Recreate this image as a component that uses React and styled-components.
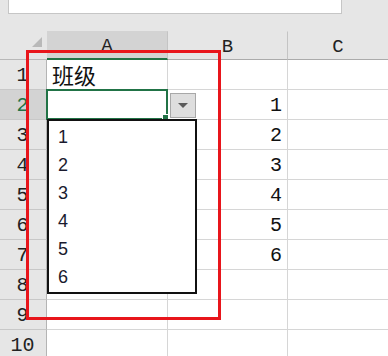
import styled, { createGlobalStyle } from "styled-components";

const GlobalStyle = createGlobalStyle`
  html, body {
    margin: 0;
    padding: 0;
    background: #e6e6e6;
  }
  #root {
    width: 388px;
    height: 356px;
    overflow: hidden;
  }
`;

const rows = [
  { n: 1, a: "班级", b: "" },
  { n: 2, a: "", b: "1", selected: true },
  { n: 3, a: "", b: "2" },
  { n: 4, a: "", b: "3" },
  { n: 5, a: "", b: "4" },
  { n: 6, a: "", b: "5" },
  { n: 7, a: "", b: "6" },
  { n: 8, a: "", b: "" },
  { n: 9, a: "", b: "" },
  { n: 10, a: "", b: "" },
];

const options = ["1", "2", "3", "4", "5", "6"];

const App = () => {
  return (
    <Window>
      <GlobalStyle />
      <FormulaStrip>
        <FormulaBox />
      </FormulaStrip>
      <Sheet>
        <Corner>
          <CornerMark />
        </Corner>
        <ColHeader $active>A</ColHeader>
        <ColHeader>B</ColHeader>
        <ColHeader $last>C</ColHeader>
        {rows.map((r) => (
          <Row key={r.n} r={r} />
        ))}
      </Sheet>
      <DropButton>
        <svg width="10" height="6" viewBox="0 0 10 6">
          <path d="M0 0 H10 L5 5 Z" fill="#5a5a5a" />
        </svg>
      </DropButton>
      <DropList>
        {options.map((o) => (
          <DropItem key={o}>{o}</DropItem>
        ))}
      </DropList>
      <Highlight />
    </Window>
  );
};

const Row = ({ r }) => (
  <>
    <RowHeader $active={r.selected}>{r.n}</RowHeader>
    {r.selected ? (
      <SelectedCell>
        <FillHandle />
      </SelectedCell>
    ) : (
      <TextCell>{r.a}</TextCell>
    )}
    <NumCell>{r.b}</NumCell>
    <Cell $last />
  </>
);

const Window = styled.div`
  position: relative;
  width: 388px;
  height: 356px;
  background: #e6e6e6;
  overflow: hidden;
`;

const FormulaStrip = styled.div`
  height: 31px;
  box-sizing: border-box;
  padding-left: 8px;
`;

const FormulaBox = styled.div`
  width: 334px;
  height: 14px;
  box-sizing: border-box;
  background: #fff;
  border: 1px solid #c6c6c6;
  border-top: none;
`;

const Sheet = styled.div`
  display: grid;
  grid-template-columns: 47px 121px 120px 100px;
  grid-template-rows: 29px;
  grid-auto-rows: 30px;
  font-family: "Liberation Mono", "DejaVu Sans Mono", monospace;
`;

const Corner = styled.div`
  position: relative;
  background: #e6e6e6;
  border-bottom: 1px solid #b8b8b8;
`;

const CornerMark = styled.div`
  position: absolute;
  right: 5px;
  bottom: 12px;
  width: 0;
  height: 0;
  border-left: 10px solid transparent;
  border-bottom: 10px solid #b9b9b9;
`;

const ColHeader = styled.div`
  display: flex;
  align-items: center;
  justify-content: center;
  box-sizing: border-box;
  padding-top: 2px;
  font-size: 19px;
  color: #222;
  background: ${(p) => (p.$active ? "#d3d3d3" : "#e6e6e6")};
  border-right: ${(p) => (p.$last ? "none" : "1px solid #c4c4c4")};
  border-bottom: ${(p) =>
    p.$active ? "2px solid #217346" : "1px solid #ababab"};
  border-top: 1px solid transparent;
`;

const RowHeader = styled.div`
  display: flex;
  align-items: flex-end;
  justify-content: center;
  box-sizing: border-box;
  padding-bottom: 2px;
  padding-right: 1px;
  font-size: 20px;
  color: ${(p) => (p.$active ? "#217346" : "#222")};
  background: ${(p) => (p.$active ? "#d3d3d3" : "#e6e6e6")};
  border-bottom: 1px solid #c8c8c8;
  border-right: 1px solid #b4b4b4;
`;

const Cell = styled.div`
  box-sizing: border-box;
  background: #fff;
  border-bottom: 1px solid #d6d6d6;
  border-right: ${(p) => (p.$last ? "none" : "1px solid #d6d6d6")};
`;

const TextCell = styled(Cell)`
  display: flex;
  align-items: flex-end;
  padding: 0 0 1px 5px;
  font-family: "Noto Sans CJK SC", sans-serif;
  font-size: 22px;
  line-height: 27px;
  color: #111;
`;

const NumCell = styled(Cell)`
  display: flex;
  align-items: flex-end;
  justify-content: flex-end;
  padding: 0 5px 2px 0;
  font-size: 20px;
  color: #111;
`;

const SelectedCell = styled.div`
  position: relative;
  box-sizing: border-box;
  margin: -1px 0 0 -1px;
  background: #fff;
  border: 2px solid #217346;
`;

const FillHandle = styled.div`
  position: absolute;
  right: -3px;
  bottom: -3px;
  width: 5px;
  height: 5px;
  background: #217346;
  border: 1px solid #fff;
`;

const DropButton = styled.div`
  position: absolute;
  left: 170px;
  top: 93px;
  width: 26px;
  height: 25px;
  box-sizing: border-box;
  display: flex;
  align-items: center;
  justify-content: center;
  background: #dedede;
  border: 1px solid #a8a8a8;
`;

const DropList = styled.div`
  position: absolute;
  left: 47px;
  top: 119px;
  width: 150px;
  height: 175px;
  box-sizing: border-box;
  padding: 2px 0 0 9px;
  background: #fff;
  border: 2px solid #111;
  display: flex;
  flex-direction: column;
  font-family: "Liberation Sans", Arial, sans-serif;
  font-size: 18px;
  color: #1a1a2e;
`;

const DropItem = styled.div`
  height: 28.6px;
  display: flex;
  align-items: center;
`;

const Highlight = styled.div`
  position: absolute;
  left: 26px;
  top: 50px;
  width: 195px;
  height: 270px;
  box-sizing: border-box;
  border: 3px solid #e8151b;
  pointer-events: none;
`;

export default App;
